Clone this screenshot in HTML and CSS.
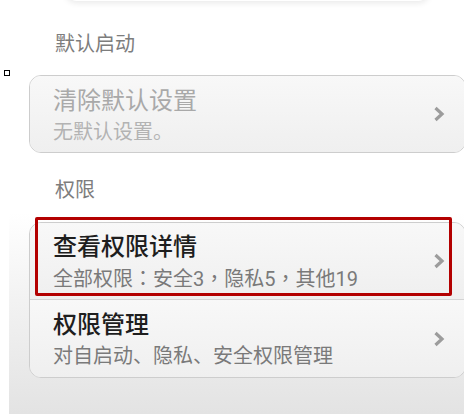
FILE: index.html
```html
<!DOCTYPE html>
<html lang="zh-CN">
<head>
    <meta charset="UTF-8">
    <meta name="viewport" content="width=device-width, initial-scale=1.0">
    <title>应用信息</title>
    <link rel="stylesheet" href="styles.css">
</head>
<body>
    <div class="top-card"></div>
    <span class="marker"></span>

    <div class="section-label">默认启动</div>
    <div class="card">
        <div class="row disabled">
            <div class="row-text">
                <div class="row-title">清除默认设置</div>
                <div class="row-sub">无默认设置。</div>
            </div>
            <svg class="chevron" width="12" height="16" viewBox="0 0 12 16"><polyline points="2.5,2 9,8 2.5,14" /></svg>
        </div>
    </div>

    <div class="lower">
        <div class="section-label">权限</div>
        <div class="card">
            <div class="row">
                <div class="row-text">
                    <div class="row-title">查看权限详情</div>
                    <div class="row-sub">全部权限<span class="punct" lang="zh-TW">：</span>安全3<span class="punct" lang="zh-TW">，</span>隐私5<span class="punct" lang="zh-TW">，</span>其他19</div>
                </div>
                <svg class="chevron" width="12" height="16" viewBox="0 0 12 16"><polyline points="2.5,2 9,8 2.5,14" /></svg>
            </div>
            <div class="row">
                <div class="row-text">
                    <div class="row-title">权限管理</div>
                    <div class="row-sub">对自启动、隐私、安全权限管理</div>
                </div>
                <svg class="chevron" width="12" height="16" viewBox="0 0 12 16"><polyline points="2.5,2 9,8 2.5,14" /></svg>
            </div>
        </div>
    </div>

    <div class="highlight"></div>
</body>
</html>
```

FILE: styles.css
```css
* {
    box-sizing: border-box;
}
body {
    font-family: Roboto, 'Noto Sans CJK SC', sans-serif;
    margin: 0;
    width: 464px;
    height: 414px;
    overflow: hidden;
    background-color: white;
    position: relative;
    display: flex;
    flex-direction: column;
}
.top-card {
    height: 12px;
    margin: -11px 34px 0 65px;
    background-color: white;
    border-radius: 0 0 16px 16px;
    box-shadow: 0 2px 6px rgba(0,0,0,0.09);
    flex-shrink: 0;
}
.marker {
    position: absolute;
    left: 4px;
    top: 70px;
    width: 6px;
    height: 6px;
    border: 1px solid #000;
}
.section-label {
    padding-left: 55px;
    margin-top: 28px;
    font-size: 20px;
    line-height: 30px;
    color: #7d7d7d;
}
.card {
    margin: 16px 0 0 29px;
    width: 437px;
    border: 1px solid #cdcdcd;
    border-radius: 12px;
    background-color: #f6f6f6;
    overflow: hidden;
    flex-shrink: 0;
}
.row {
    display: flex;
    align-items: center;
    justify-content: space-between;
    height: 76px;
    padding: 0 20px 0 23px;
    background: linear-gradient(#f8f8f8, #efefef);
}
.row + .row {
    border-top: 1px solid #d4d4d4;
    height: 78px;
}
.row-text {
    padding-top: 3px;
}
.row-title {
    font-size: 24px;
    line-height: 30px;
    font-weight: 500;
    color: #1e1e1e;
}
.row-sub {
    font-size: 20px;
    line-height: 28px;
    color: #7a7a7a;
    margin-top: 2px;
}
.punct {
    font-family: 'Noto Sans CJK TC', sans-serif;
}
.disabled .row-title {
    color: #a9a9a9;
    font-weight: 400;
}
.disabled .row-sub {
    color: #b3b3b3;
}
.chevron polyline {
    fill: none;
    stroke: #9c9c9c;
    stroke-width: 3.2;
}
.lower {
    flex: 1;
    margin-left: 9px;
    background: linear-gradient(#ffffff 0, #ffffff 60px, #f3f3f3 140px, #e3e3e3 100%);
}
.lower .section-label {
    padding-left: 46px;
    margin-top: 22px;
}
.lower .card {
    margin: 17px 0 0 20px;
}
.highlight {
    position: absolute;
    left: 35px;
    top: 217px;
    width: 417px;
    height: 79px;
    border: 3px solid #b30000;
    border-radius: 2px;
}
```
